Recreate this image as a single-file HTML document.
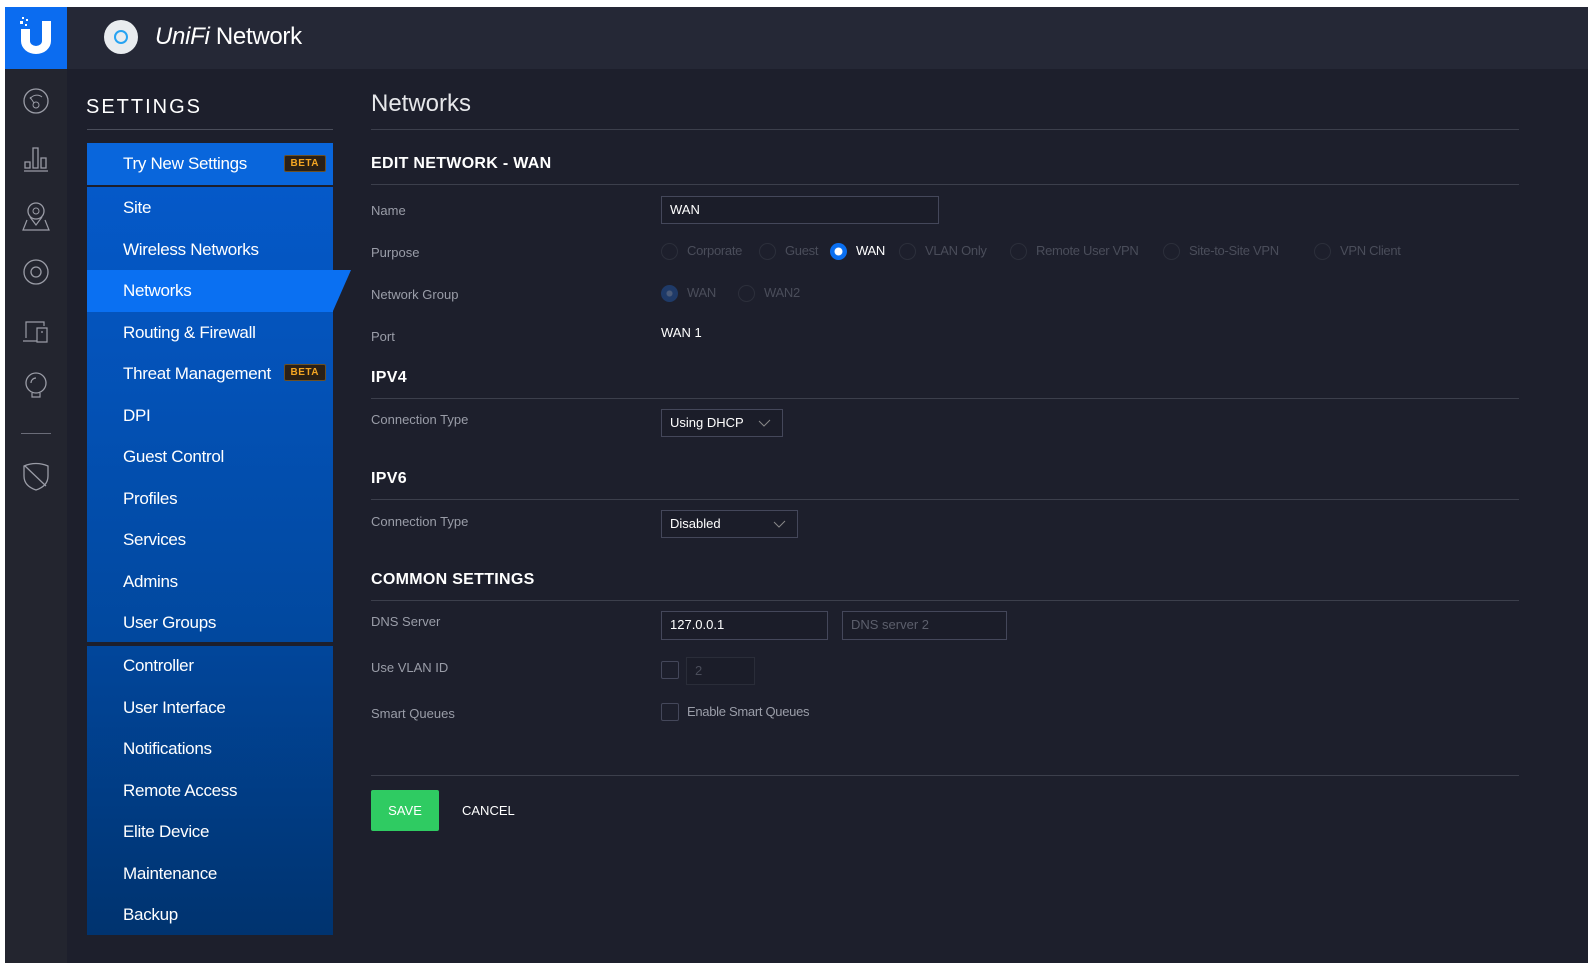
<!DOCTYPE html>
<html><head><style>
*{box-sizing:border-box;margin:0;padding:0}
body{width:1588px;height:963px;background:#fff;font-family:"Liberation Sans",sans-serif;position:relative;overflow:hidden}
.abs{position:absolute}
#rail{left:5px;top:7px;width:62px;height:956px;background:#23252f}
#logo{left:5px;top:7px;width:62px;height:62px;background:#0b6cf0}
#hdr{left:67px;top:7px;width:1521px;height:62px;background:#252836}
#main{left:67px;top:69px;width:1521px;height:894px;background:#1d1f2c}
.it{position:absolute;left:87px;width:246px;height:41.5px;color:#fff;font-size:17px;padding-left:36px;line-height:41px;letter-spacing:-0.3px}
.beta{position:absolute;right:7px;top:12px;background:#2a2016;border:1px solid #6b5024;color:#f5a623;font-size:10px;font-weight:bold;line-height:15px;padding:0 6px;border-radius:2px;letter-spacing:.5px}
.lbl{position:absolute;left:371px;color:#9a9da8;font-size:13px}
.h{position:absolute;left:371px;color:#fff;font-size:16px;font-weight:bold;letter-spacing:.3px}
.line{position:absolute;left:371px;width:1148px;height:1px;background:#3c3f4c}
.inp{position:absolute;border:1px solid #44475a;background:#1b1d29;color:#fff;font-size:13px;padding-left:8px;line-height:26px}
.rad{position:absolute;color:#4a4d5a;font-size:13px;top:243px;letter-spacing:-0.3px}
.rc{display:inline-block;width:17px;height:17px;border-radius:50%;border:1px solid #2c2f3b;vertical-align:middle;margin-right:9px}
.chk{position:absolute;width:18px;height:18px;border:1px solid #44475a;border-radius:2px}
.ic{position:absolute;left:22px}
.chev{position:absolute;top:9px}
</style></head><body>
<div class="abs" id="rail"></div>
<div class="abs" id="logo">
<svg width="62" height="62" viewBox="0 0 62 62"><path d="M16 22 v12 a15 13 0 0 0 30 0 v-20 h-9 v20 a6 5 0 0 1 -12 0 v-12z" fill="#fff"/><g fill="#fff"><rect x="15" y="14" width="3" height="3"/><rect x="20" y="17" width="2" height="2"/><rect x="17" y="10" width="2" height="2"/><rect x="21" y="12" width="2" height="2"/></g></svg>
</div>
<div class="abs" id="hdr">
<div class="abs" style="left:37px;top:13px;width:34px;height:34px;border-radius:50%;background:#e9ecef"></div>
<div class="abs" style="left:47px;top:23px;width:14px;height:14px;border-radius:50%;border:2px solid #27a3f2"></div>
<div class="abs" style="left:88px;top:16px;color:#fff;font-size:24px;letter-spacing:-0.3px"><i>UniFi</i> Network</div>
</div>
<div class="abs" id="main"></div>
<!-- rail icons -->
<svg class="ic" style="top:87px" width="28" height="28"><circle cx="14" cy="14" r="12" fill="none" stroke="#9a9ca6" stroke-width="1.3"/><circle cx="14" cy="18" r="3" fill="none" stroke="#9a9ca6"/><path d="M12 16 L8 10 M8 12 a8 8 0 0 1 12 -2" fill="none" stroke="#9a9ca6"/></svg>
<svg class="ic" style="top:144px" width="28" height="28"><path d="M2 27h24 M3 24v-6h5v6z M11 24v-20h5v20z M19 24v-10h5v10z" fill="none" stroke="#9a9ca6" stroke-width="1.3"/></svg>
<svg class="ic" style="top:200px" width="28" height="32"><circle cx="14" cy="11" r="8" fill="none" stroke="#9a9ca6" stroke-width="1.3"/><circle cx="14" cy="11" r="3" fill="none" stroke="#9a9ca6"/><path d="M8 17 L14 25 L20 17 M5 20 L1 30 H27 L23 20" fill="none" stroke="#9a9ca6" stroke-width="1.2"/></svg>
<svg class="ic" style="top:258px" width="28" height="28"><circle cx="14" cy="14" r="12" fill="none" stroke="#9a9ca6" stroke-width="1.3"/><circle cx="14" cy="14" r="5" fill="none" stroke="#9a9ca6" stroke-width="1.3"/></svg>
<svg class="ic" style="top:318px" width="28" height="28"><path d="M4 20V4h18v4 M1 23h14 M15 10h10v14H15z M19 14h2" fill="none" stroke="#9a9ca6" stroke-width="1.2"/></svg>
<svg class="ic" style="top:370px" width="28" height="32"><circle cx="14" cy="13" r="10" fill="none" stroke="#9a9ca6" stroke-width="1.3"/><path d="M10 23v4h8v-4 M9 13 a5 5 0 0 1 5 -5" fill="none" stroke="#9a9ca6" stroke-width="1.2"/></svg>
<div class="abs" style="left:21px;top:433px;width:30px;height:1px;background:#6a6c78"></div>
<svg class="ic" style="top:460px" width="28" height="32"><path d="M2 6 Q14 1 26 6 V16 Q26 26 14 30 Q2 26 2 16Z M3 6 L24 26" fill="none" stroke="#9a9ca6" stroke-width="1.3"/></svg>

<div class="abs" style="left:86px;top:96px;color:#fff;font-size:20px;letter-spacing:2px">SETTINGS</div>
<div class="abs" style="left:87px;top:129px;width:246px;height:1px;background:#4a4d5a"></div>
<div class="abs" style="left:87px;top:187px;width:246px;height:455px;background:linear-gradient(#0559c9,#01489e)"></div>
<div class="abs" style="left:87px;top:646px;width:246px;height:289px;background:linear-gradient(#01469b,#00336f)"></div>
<div class="it" style="top:143px;background:#0966dc">Try New Settings<span class="beta">BETA</span></div>
<div class="it" style="top:187px">Site</div>
<div class="it" style="top:228.5px">Wireless Networks</div>
<div class="it" style="top:270px;background:#0a70f2">Networks</div>
<svg class="abs" style="left:333px;top:270px" width="18" height="42"><path d="M0 0H18L0 41Z" fill="#0a70f2"/></svg>
<div class="it" style="top:311.5px">Routing &amp; Firewall</div>
<div class="it" style="top:353px">Threat Management<span class="beta" style="top:11px">BETA</span></div>
<div class="it" style="top:394.5px">DPI</div>
<div class="it" style="top:436px">Guest Control</div>
<div class="it" style="top:477.5px">Profiles</div>
<div class="it" style="top:519px">Services</div>
<div class="it" style="top:560.5px">Admins</div>
<div class="it" style="top:602px">User Groups</div>
<div class="it" style="top:645px">Controller</div>
<div class="it" style="top:686.5px">User Interface</div>
<div class="it" style="top:728px">Notifications</div>
<div class="it" style="top:769.5px">Remote Access</div>
<div class="it" style="top:811px">Elite Device</div>
<div class="it" style="top:852.5px">Maintenance</div>
<div class="it" style="top:894px">Backup</div>

<div class="abs" style="left:371px;top:90px;color:#e6e7ea;font-size:24px">Networks</div>
<div class="line" style="top:129px"></div>
<div class="h" style="top:155px">EDIT NETWORK - WAN</div>
<div class="line" style="top:184px"></div>
<div class="lbl" style="top:203px">Name</div>
<div class="inp" style="left:661px;top:196px;width:278px;height:28px">WAN</div>
<div class="lbl" style="top:245px">Purpose</div>
<div class="rad" style="left:661px"><span class="rc"></span>Corporate</div>
<div class="rad" style="left:759px"><span class="rc"></span>Guest</div>
<div class="rad" style="left:830px;color:#fff"><span class="rc" style="border:none;background:radial-gradient(#fff 30%,#0a6ff0 36%)"></span>WAN</div>
<div class="rad" style="left:899px"><span class="rc"></span>VLAN Only</div>
<div class="rad" style="left:1010px"><span class="rc"></span>Remote User VPN</div>
<div class="rad" style="left:1163px"><span class="rc"></span>Site-to-Site VPN</div>
<div class="rad" style="left:1314px"><span class="rc"></span>VPN Client</div>
<div class="lbl" style="top:287px">Network Group</div>
<div class="rad" style="left:661px;top:285px"><span class="rc" style="background:radial-gradient(#4a5a78 25%,#1f3a68 32%);border-color:#1f3a68"></span>WAN</div>
<div class="rad" style="left:738px;top:285px"><span class="rc"></span>WAN2</div>
<div class="lbl" style="top:329px">Port</div>
<div class="abs" style="left:661px;top:325px;color:#fff;font-size:13px">WAN 1</div>
<div class="h" style="top:369px">IPV4</div>
<div class="line" style="top:398px"></div>
<div class="lbl" style="top:412px">Connection Type</div>
<div class="inp" style="left:661px;top:409px;width:122px;height:28px">Using DHCP<svg class="chev" style="left:96px" width="14" height="10"><path d="M1 2 L6 7 L12 1" fill="none" stroke="#888" stroke-width="1"/></svg></div>
<div class="h" style="top:470px">IPV6</div>
<div class="line" style="top:499px"></div>
<div class="lbl" style="top:514px">Connection Type</div>
<div class="inp" style="left:661px;top:510px;width:137px;height:28px">Disabled<svg class="chev" style="left:111px" width="14" height="10"><path d="M1 2 L6 7 L12 1" fill="none" stroke="#888" stroke-width="1"/></svg></div>
<div class="h" style="top:571px">COMMON SETTINGS</div>
<div class="line" style="top:600px"></div>
<div class="lbl" style="top:614px">DNS Server</div>
<div class="inp" style="left:661px;top:611px;width:167px;height:29px">127.0.0.1</div>
<div class="inp" style="left:842px;top:611px;width:165px;height:29px;color:#5c5f6c">DNS server 2</div>
<div class="lbl" style="top:660px">Use VLAN ID</div>
<div class="chk" style="left:661px;top:661px"></div>
<div class="inp" style="left:686px;top:657px;width:69px;height:28px;border-color:#2a2d39;color:#4a4d5a">2</div>
<div class="lbl" style="top:706px">Smart Queues</div>
<div class="chk" style="left:661px;top:703px"></div>
<div class="abs" style="left:687px;top:704px;color:#9a9da8;font-size:13px;letter-spacing:-0.3px">Enable Smart Queues</div>
<div class="line" style="top:775px"></div>
<div class="abs" style="left:371px;top:790px;width:68px;height:41px;background:#2fcb62;border-radius:2px;color:#fff;font-size:13px;text-align:center;line-height:41px">SAVE</div>
<div class="abs" style="left:462px;top:803px;color:#fff;font-size:13px">CANCEL</div>
</body></html>
